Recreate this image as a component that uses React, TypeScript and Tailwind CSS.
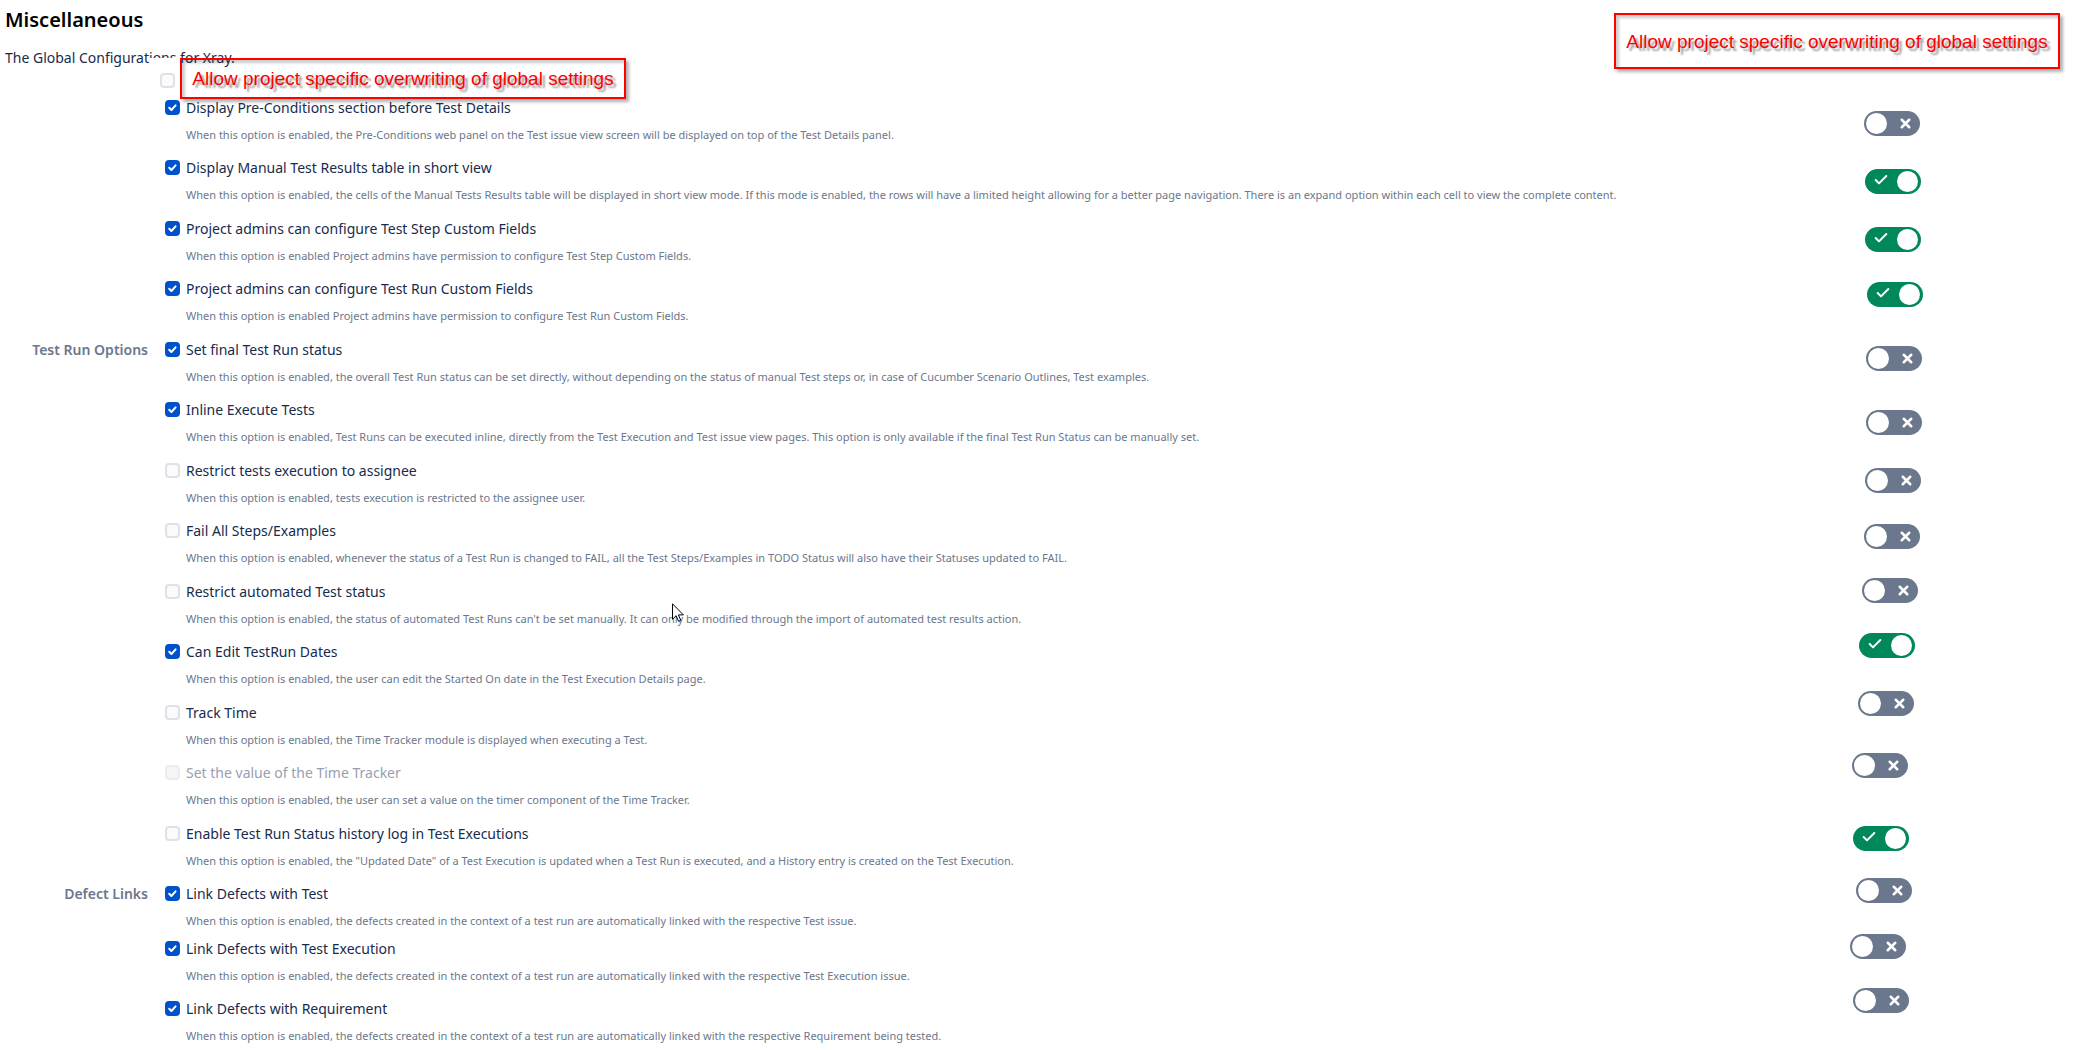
import { Check, X } from 'lucide-react'

type Option = {
  id: string
  label: string
  help: string
  checked?: boolean
  disabled?: boolean
  group?: string
}

const options: Option[] = [
  { id: 'preconditions', label: 'Display Pre-Conditions section before Test Details', help: 'When this option is enabled, the Pre-Conditions web panel on the Test issue view screen will be displayed on top of the Test Details panel.', checked: true },
  { id: 'short-view', label: 'Display Manual Test Results table in short view', help: 'When this option is enabled, the cells of the Manual Tests Results table will be displayed in short view mode. If this mode is enabled, the rows will have a limited height allowing for a better page navigation. There is an expand option within each cell to view the complete content.', checked: true },
  { id: 'step-fields', label: 'Project admins can configure Test Step Custom Fields', help: 'When this option is enabled Project admins have permission to configure Test Step Custom Fields.', checked: true },
  { id: 'run-fields', label: 'Project admins can configure Test Run Custom Fields', help: 'When this option is enabled Project admins have permission to configure Test Run Custom Fields.', checked: true },
  { id: 'final-status', label: 'Set final Test Run status', help: 'When this option is enabled, the overall Test Run status can be set directly, without depending on the status of manual Test steps or, in case of Cucumber Scenario Outlines, Test examples.', checked: true, group: 'Test Run Options' },
  { id: 'inline', label: 'Inline Execute Tests', help: 'When this option is enabled, Test Runs can be executed inline, directly from the Test Execution and Test issue view pages. This option is only available if the final Test Run Status can be manually set.', checked: true },
  { id: 'restrict-assignee', label: 'Restrict tests execution to assignee', help: 'When this option is enabled, tests execution is restricted to the assignee user.' },
  { id: 'fail-all', label: 'Fail All Steps/Examples', help: 'When this option is enabled, whenever the status of a Test Run is changed to FAIL, all the Test Steps/Examples in TODO Status will also have their Statuses updated to FAIL.' },
  { id: 'restrict-automated', label: 'Restrict automated Test status', help: "When this option is enabled, the status of automated Test Runs can't be set manually. It can only be modified through the import of automated test results action." },
  { id: 'edit-dates', label: 'Can Edit TestRun Dates', help: 'When this option is enabled, the user can edit the Started On date in the Test Execution Details page.', checked: true },
  { id: 'track-time', label: 'Track Time', help: 'When this option is enabled, the Time Tracker module is displayed when executing a Test.' },
  { id: 'tracker-value', label: 'Set the value of the Time Tracker', help: 'When this option is enabled, the user can set a value on the timer component of the Time Tracker.', disabled: true },
  { id: 'history-log', label: 'Enable Test Run Status history log in Test Executions', help: 'When this option is enabled, the "Updated Date" of a Test Execution is updated when a Test Run is executed, and a History entry is created on the Test Execution.' },
]

const defectLinks: Option[] = [
  { id: 'link-test', label: 'Link Defects with Test', help: 'When this option is enabled, the defects created in the context of a test run are automatically linked with the respective Test issue.', checked: true, group: 'Defect Links' },
  { id: 'link-execution', label: 'Link Defects with Test Execution', help: 'When this option is enabled, the defects created in the context of a test run are automatically linked with the respective Test Execution issue.', checked: true },
  { id: 'link-requirement', label: 'Link Defects with Requirement', help: 'When this option is enabled, the defects created in the context of a test run are automatically linked with the respective Requirement being tested.', checked: true },
]

// hand placed toggles, measured from the top right corner
const toggles = [
  { right: 169, top: 111, on: false },
  { right: 168, top: 169, on: true },
  { right: 168, top: 227, on: true },
  { right: 166, top: 282, on: true },
  { right: 167, top: 346, on: false },
  { right: 167, top: 410, on: false },
  { right: 168, top: 468, on: false },
  { right: 169, top: 524, on: false },
  { right: 171, top: 578, on: false },
  { right: 174, top: 633, on: true },
  { right: 175, top: 691, on: false },
  { right: 181, top: 753, on: false },
  { right: 180, top: 826, on: true },
  { right: 177, top: 878, on: false },
  { right: 183, top: 934, on: false },
  { right: 180, top: 988, on: false },
]

function Checkbox({ id, checked, disabled, label }: { id: string; checked?: boolean; disabled?: boolean; label?: string }) {
  return (
    <span className="grid size-[15px] shrink-0">
      <input
        id={id}
        type="checkbox"
        aria-label={label}
        defaultChecked={checked}
        disabled={disabled}
        className="peer col-start-1 row-start-1 size-[15px] appearance-none rounded-[4px] border-2 border-[#dfe1e6] bg-[#fafbfc] checked:border-[#0052cc] checked:bg-[#0052cc] disabled:border-[#ebecf0] disabled:bg-[#f4f5f7]"
      />
      <svg viewBox="0 0 15 15" className="pointer-events-none invisible col-start-1 row-start-1 size-[15px] peer-checked:visible" fill="none" stroke="white" strokeWidth="2" strokeLinecap="round" strokeLinejoin="round">
        <path d="M4.2 7.8 6.4 10 10.6 5.4" />
      </svg>
    </span>
  )
}

function OptionRow({ option }: { option: Option }) {
  return (
    <>
      <div className="w-[148px] shrink-0 text-right text-sm font-semibold text-[#6b778c]">{option.group}</div>
      <div className="ml-[17px] pt-[2px]">
        <Checkbox id={option.id} checked={option.checked} disabled={option.disabled} />
      </div>
      <div className="ml-[6px]">
        <label htmlFor={option.id} className={option.disabled ? 'block text-sm text-[#97a0af]' : 'block text-sm text-[#172b4d]'}>
          {option.label}
        </label>
        <p className="mt-[9px] text-[11px] leading-4 text-[#6b778c]">{option.help}</p>
      </div>
    </>
  )
}

function Toggle({ on, label }: { on: boolean; label: string }) {
  return (
    <button
      type="button"
      role="switch"
      aria-checked={on}
      aria-label={label}
      className={
        on
          ? 'flex h-[25px] w-14 flex-row-reverse items-center justify-between rounded-full bg-[#00875a] pr-[3px] pl-2'
          : 'flex h-[25px] w-14 items-center justify-between rounded-full bg-[#6b778c] pr-[7px] pl-[2px]'
      }
    >
      <span className="size-[21px] rounded-full bg-white" />
      {on ? <Check className="mb-1 size-4 text-white" strokeWidth={3} /> : <X className="size-[15px] text-white" strokeWidth={4} />}
    </button>
  )
}

function Callout({ className }: { className: string }) {
  return (
    <div className={`flex w-[446px] items-center justify-center border-2 border-[#ff0000] pt-[2px] font-['Liberation_Sans',Arial,sans-serif] text-[19px] whitespace-nowrap text-[#ff0000] shadow-[3px_3px_3px_rgba(0,0,0,0.3),inset_3px_3px_3px_rgba(0,0,0,0.2)] [text-shadow:3px_3px_2px_rgba(0,0,0,0.4)] ${className}`}>
      Allow project specific overwriting of global settings
    </div>
  )
}

export default function App() {
  const rows = [...options, ...defectLinks]
  return (
    <main className="relative min-h-screen bg-white pb-2 font-['Noto_Sans','Open_Sans',sans-serif]">
      <h1 className="px-[5px] pt-[6px] text-[20px] leading-7 font-semibold text-black">Miscellaneous</h1>
      <p className="mt-[14px] px-[5px] text-sm text-[#172b4d]">The Global Configurations for Xray.</p>

      <form className="mt-[30px]">
        <div>
          {options.map((option) => (
            <div key={option.id} className="flex h-[60px] even:h-[61px]">
              <OptionRow option={option} />
            </div>
          ))}
        </div>
        <div>
          {defectLinks.map((option) => (
            <div key={option.id} className="flex h-[60px] first:h-[55px]">
              <OptionRow option={option} />
            </div>
          ))}
        </div>
      </form>

      {/* annotations drawn over the settings page */}
      <div className="absolute top-[58px] left-[150px] flex">
        <div className="w-[30px] bg-white pt-[15px] pl-[10px]">
          <Checkbox id="project-override" label="Allow project specific overwriting of global settings" />
        </div>
        <Callout className="h-[41px]" />
      </div>
      <Callout className="absolute top-[13px] right-[29px] h-[56px]" />
      {toggles.map((toggle, i) => (
        <div key={rows[i].id} className="absolute" style={{ top: toggle.top, right: toggle.right }}>
          <Toggle on={toggle.on} label={`Overwrite: ${rows[i].label}`} />
        </div>
      ))}

      <svg viewBox="0 0 12 19" className="absolute top-[603px] left-[672px] h-[19px] w-3" aria-hidden="true">
        <path d="M.5.8v15.4l3.6-3.5 2.4 5.6 2.3-1-2.4-5.4h5z" fill="white" stroke="black" strokeWidth="1" />
      </svg>
    </main>
  )
}
